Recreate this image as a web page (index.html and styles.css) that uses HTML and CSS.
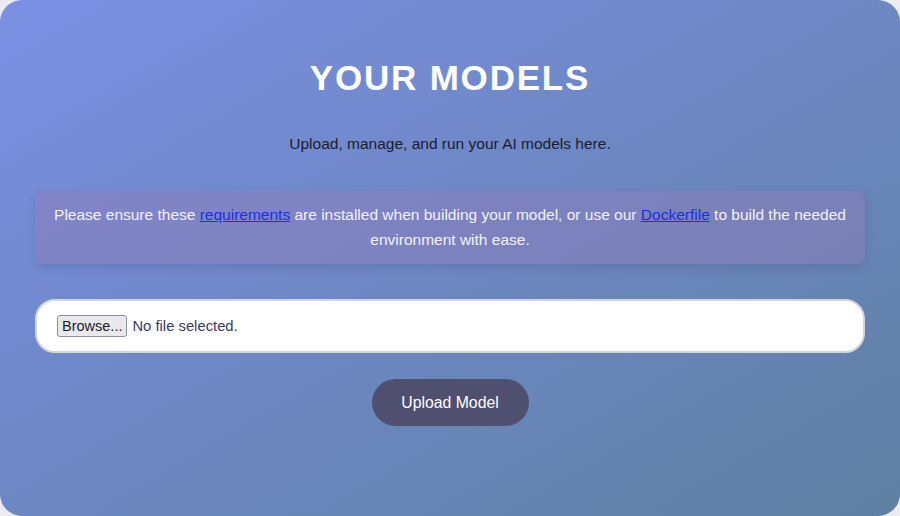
FILE: index.html
```html
<!DOCTYPE html>
<html lang="en">
<head>
    <meta charset="UTF-8">
    <title>Your Models</title>
    <link rel="stylesheet" href="styles.css">
</head>
<body>
    <div class="models-page">
        <h1 class="title">YOUR MODELS</h1>
        <p class="subtitle">Upload, manage, and run your AI models here.</p>

        <div class="notice">
            Please ensure these <a href="#">requirements</a> are installed when building your model, or use our <a href="#">Dockerfile</a> to build the needed environment with ease.
        </div>

        <form class="upload-form">
            <div class="file-box">
                <label class="browse-btn" for="model_file">Browse...</label>
                <span class="file-name">No file selected.</span>
                <input type="file" id="model_file" class="file-input">
            </div>
            <button type="button" class="upload-btn">Upload Model</button>
        </form>
    </div>
</body>
</html>
```

FILE: styles.css
```css
html, body {
    margin: 0;
    height: 100%;
    background: #ececf0;
}
body {
    font-family: "Liberation Sans", Arial, sans-serif;
}
.models-page {
    box-sizing: border-box;
    height: 516px;
    padding: 58px 35px 0;
    border-radius: 22px;
    background: linear-gradient(150deg, #7c8fe4 0%, #6e88c6 45%, #5e81a2 100%);
    display: flex;
    flex-direction: column;
    align-items: center;
}
.title {
    margin: 0;
    color: #fff;
    font-size: 35px;
    line-height: 40px;
    letter-spacing: 1.8px;
    font-weight: bold;
}
.subtitle {
    margin: 36px 0 0;
    color: #1c1c2c;
    font-size: 15.5px;
    line-height: 20px;
}
.notice {
    box-sizing: border-box;
    width: 100%;
    margin-top: 37px;
    padding: 11px 15px 12px;
    border-radius: 8px;
    background: rgba(145, 125, 185, 0.45);
    box-shadow: 0 4px 10px rgba(40, 40, 90, 0.15);
    color: #f1f1f6;
    font-size: 15.5px;
    line-height: 25px;
    text-align: center;
}
.notice a {
    color: #1c2ee8;
}
.upload-form {
    width: 100%;
    margin-top: 35px;
    display: flex;
    flex-direction: column;
    align-items: center;
}
.file-box {
    box-sizing: border-box;
    width: 100%;
    height: 54px;
    padding: 0 20px;
    border: 2px solid #d4d4dc;
    border-radius: 20px;
    background: #fff;
    display: flex;
    align-items: center;
}
.browse-btn {
    box-sizing: border-box;
    height: 22px;
    padding: 0 4px;
    border: 1px solid #8f8f9d;
    border-radius: 3px;
    background: #e9e9ed;
    color: #1b1b2b;
    font-size: 14.5px;
    line-height: 20px;
}
.file-name {
    margin-left: 5px;
    color: #3b3b5a;
    font-size: 14.8px;
}
.file-input {
    display: none;
}
.upload-btn {
    margin-top: 26px;
    width: 157px;
    height: 47px;
    border: none;
    border-radius: 24px;
    background: #4f4f70;
    color: #fff;
    font-family: "Liberation Sans", Arial, sans-serif;
    font-size: 15.8px;
}
```
